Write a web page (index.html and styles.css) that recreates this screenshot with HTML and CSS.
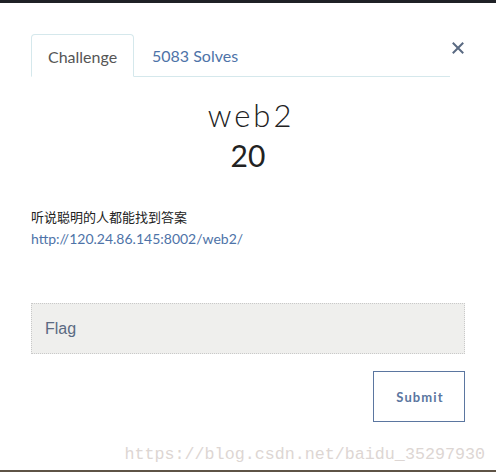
FILE: index.html
```html
<!DOCTYPE html>
<html>
<head>
<meta charset="utf-8">
<link rel="stylesheet" href="styles.css">
</head>
<body>
<div class="topbar"></div>
<div class="modal">
  <div class="header">
    <div class="tabs">
      <div class="tab active">Challenge</div>
      <div class="tab link">5083 Solves</div>
    </div>
    <div class="close">
      <svg width="12" height="12" viewBox="0 0 12 12"><path d="M1.5 1.5L10.5 10.5M10.5 1.5L1.5 10.5" stroke="#5a6a82" stroke-width="2" stroke-linecap="square"/></svg>
    </div>
  </div>
  <div class="title">web2</div>
  <div class="points">20</div>
  <div class="desc">
    <p class="cn">听说聪明的人都能找到答案</p>
    <a class="url">http://120.24.86.145:8002/web2/</a>
  </div>
  <div class="flag">Flag</div>
  <div class="actions"><div class="submit">Submit</div></div>
  <div class="watermark">https://blog.csdn.net/baidu_35297930</div>
</div>
<div class="bottomline"></div>
</body>
</html>
```
FILE: styles.css
```css
html, body { margin: 0; padding: 0; background: #fff; }
body { width: 496px; height: 472px; overflow: hidden; font-family: Lato, "Noto Sans CJK SC", sans-serif; display: flex; flex-direction: column; }
.topbar { height: 3px; background: #1f2126; flex: none; }
.modal { flex: 1; padding: 31px 31px 0 31px; display: flex; flex-direction: column; }
.header { display: flex; align-items: flex-start; }
.tabs { width: 420px; display: flex; border-bottom: 1px solid #d5e8ec; height: 42px; }
.tab { font-size: 16px; padding: 0 17px; line-height: 44px; box-sizing: border-box; height: 43px; }
.tab.active { color: #555; border: 1px solid #d5e8ec; border-bottom-color: #fff; border-radius: 4px 4px 0 0; width: 103px; padding-left: 16px; }
.tab.link { color: #4e73a8; padding-left: 18px; }
.close { width: 14px; padding-left: 1px; padding-top: 8px; display: flex; justify-content: center; }
.title { text-align: center; font-size: 31px; font-weight: 300; color: #222; letter-spacing: 3px; margin-top: 20px; line-height: 36px; padding-left: 6px; }
.points { text-align: center; font-size: 30px; font-weight: 400; color: #222; line-height: 36px; margin-top: 4px; }
.desc { margin-top: 33px; }
.cn { margin: 0; color: #222; line-height: 22px; font-family: "Noto Sans CJK SC", sans-serif; font-size: 13px; }
.url { color: #4e73a8; display: block; line-height: 22px; font-size: 14px; font-family: Lato, sans-serif; }
.flag { margin-top: 53px; height: 51px; box-sizing: border-box; background: #efefed; border: 1px dotted #c9c9c9; font-family: "Liberation Sans", Arial, sans-serif; font-size: 16px; color: #5a6a82; padding-left: 13px; line-height: 49px; }
.actions { display: flex; justify-content: flex-end; margin-top: 17px; }
.submit { width: 92px; height: 51px; box-sizing: border-box; border: 1.5px solid #5b76a0; color: #5b76a0; font-weight: 700; font-size: 13px; letter-spacing: 1.1px; display: flex; align-items: center; justify-content: center; padding-left: 2px; }
.watermark { font-family: "Liberation Mono", monospace; font-size: 16.7px; color: #ddd6d3; text-align: right; margin-right: -20px; margin-top: 22px; line-height: 22px; }
.bottomline { height: 2px; background: #5e5346; flex: none; margin-top: -2px; }
```
